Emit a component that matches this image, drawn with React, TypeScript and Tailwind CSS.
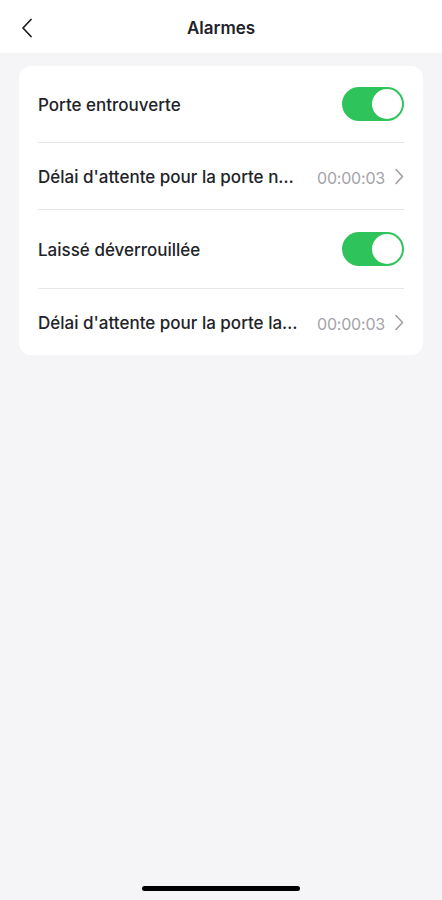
import React from "react";

function Toggle() {
  return (
    <div className="flex h-[34px] w-[62px] shrink-0 items-center justify-end rounded-full bg-[#2fc35c] p-[2px]">
      <div className="h-[30px] w-[30px] rounded-full bg-white" />
    </div>
  );
}

function Chevron() {
  return (
    <svg width="10" height="17" viewBox="0 0 10 17" fill="none" className="shrink-0">
      <path d="M2 1.5 L8.5 8.5 L2 15.5" stroke="#a0a0a5" strokeWidth="1.6" strokeLinecap="round" strokeLinejoin="round" />
    </svg>
  );
}

const rows = [
  { type: "toggle", label: "Porte entrouverte", h: "h-[77px]" },
  { type: "value", label: "Délai d'attente pour la porte non fermée", value: "00:00:03", h: "h-[67px]" },
  { type: "toggle", label: "Laissé déverrouillée", h: "h-[79px]" },
  { type: "value", label: "Délai d'attente pour la porte laissée déverrouillée", value: "00:00:03", h: "h-[66px]" },
];

export default function App() {
  return (
    <div className="flex h-[900px] w-full flex-col bg-[#f5f5f7] font-['Inter',sans-serif] text-[#222328]">
      <header className="flex h-[53px] shrink-0 items-center bg-white px-[20px] pt-[2px]">
        <svg width="14" height="20" viewBox="0 0 14 20" fill="none" className="shrink-0">
          <path d="M11 1.5 L3 10 L11 18.5" stroke="#222328" strokeWidth="1.8" strokeLinecap="round" strokeLinejoin="round" />
        </svg>
        <h1 className="flex-1 pr-[14px] pt-[2px] text-center text-[17px] font-semibold">Alarmes</h1>
      </header>

      <div className="mx-[19px] mt-[13px] rounded-[12px] bg-white px-[19px]">
        {rows.map((row, i) => (
          <div
            key={i}
            className={`flex items-center ${row.h} ${i < rows.length - 1 ? "border-b border-[#e6e6e8]" : ""}`}
          >
            <span className="min-w-0 flex-1 truncate pt-[4px] text-[17px] font-medium">{row.label}</span>
            {row.type === "toggle" ? (
              <Toggle />
            ) : (
              <div className="ml-[16px] flex shrink-0 items-center gap-[9px]">
                <span className="pt-[4px] text-[16px] tracking-[-0.2px] text-[#a3a3a8]">{row.value}</span>
                <Chevron />
              </div>
            )}
          </div>
        ))}
      </div>

      <div className="flex-1" />
      <div className="flex h-[34px] shrink-0 items-start justify-center pt-[20px]">
        <div className="h-[5px] w-[158px] rounded-full bg-black" />
      </div>
    </div>
  );
}
